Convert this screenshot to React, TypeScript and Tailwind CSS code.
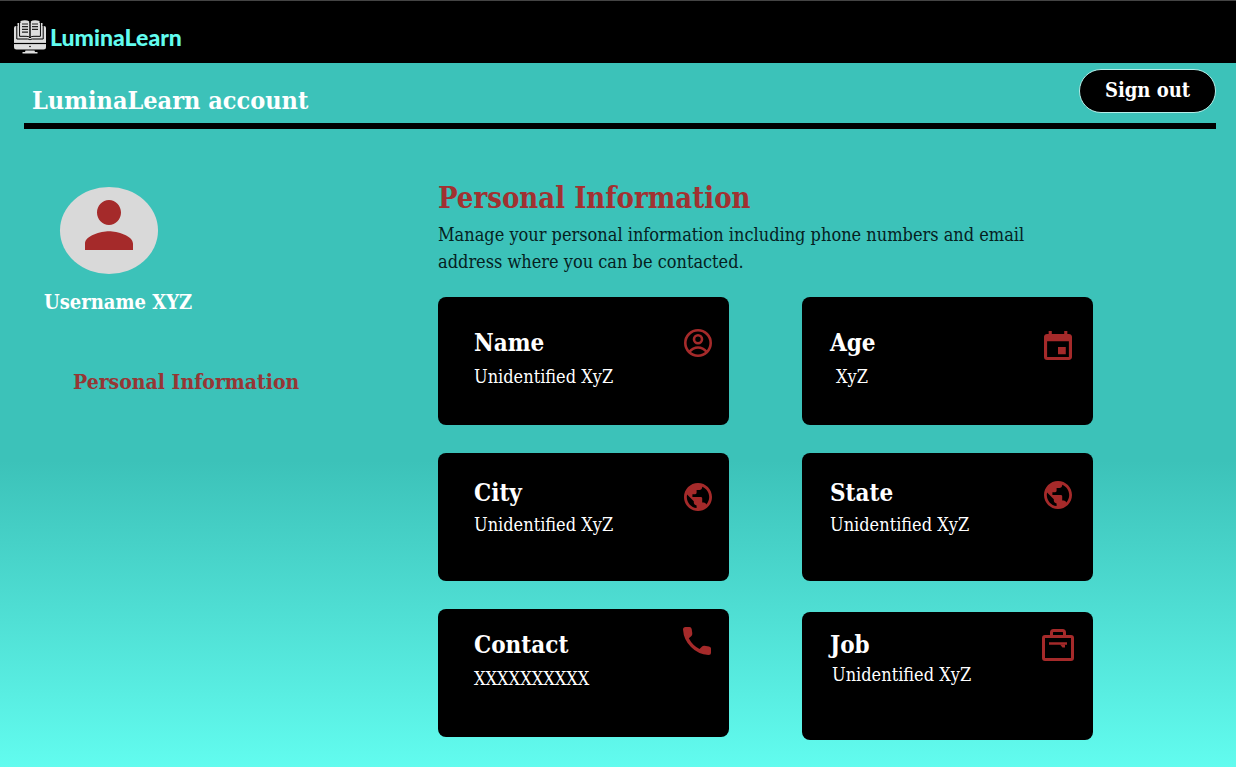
import type { ReactNode } from "react";
import { MdPublic } from "react-icons/md";

const slab = "font-['DejaVu_Serif_Condensed','DejaVu_Serif',serif]";

function LogoIcon() {
  return (
    <svg viewBox="0 0 32 34" className="h-[34px] w-8 shrink-0" aria-hidden="true">
      <path d="M2 6H30Q32 6 32 8V27Q32 29.500 29.500 29.500H2.500Q0 29.500 0 27V8Q0 6 2 6Z" fill="#dedede" />
      <path d="M3.500 3H28.500V18H3.500Z" fill="#dedede" />
      <path d="M2.800 5V19H13.500Q15.500 19 16 20Q16.500 19 18.500 19H29.200V5M5.600 2V16.300H13Q15.200 16.300 16 18Q16.800 16.300 19 16.300H26.400V2" fill="none" stroke="#000" strokeWidth="1" />
      <path d="M6.500 1Q12-.5 15.500 1.500V16.500Q12 14.500 6.500 15.300Z M16.500 1.500Q20-.5 25.500 1V15.300Q20 14.500 16.500 16.500Z" fill="#dedede" />
      <path d="M8 4H14M8 6.700H14M8 9.400H14M8 12.100H14M18 4H24M18 6.700H24M18 9.400H24" stroke="#222" strokeWidth="1.200" />
      <path d="M16 1V17.500" stroke="#000" strokeWidth="1.400" />
      <path d="M0 23.500H32" stroke="#000" strokeWidth="1.200" />
      <circle cx="16" cy="26.500" r=".8" fill="#000" />
      <path d="M11.500 30.500H20.500L21 32H23.500V33.500H8.500V32H11Z" fill="#dedede" />
    </svg>
  );
}

function AccountIcon() {
  return (
    <svg viewBox="0 0 28 28" className="size-7" fill="none" stroke="currentColor" strokeWidth="2.600" aria-hidden="true">
      <circle cx="14" cy="14" r="12.700" />
      <circle cx="14" cy="10.300" r="4" />
      <path d="M5.300 22.800Q9 18.500 14 18.500T22.700 22.800" />
    </svg>
  );
}

function CalendarIcon() {
  return (
    <svg viewBox="3 1 18 20" preserveAspectRatio="none" className="h-[29px] w-7" fill="currentColor" aria-hidden="true">
      <path d="M17 12h-5v5h5zM16 1v2H8V1H6v2H5c-1.110 0-1.990.9-1.990 2L3 19a2 2 0 0 0 2 2h14c1.100 0 2-.9 2-2V5c0-1.100-.9-2-2-2h-1V1zm3 18H5V8h14z" />
    </svg>
  );
}

function PhoneIcon() {
  return (
    <svg viewBox="0 0 28 28" className="size-7" fill="currentColor" aria-hidden="true">
      <path d="M2.500 0H6.500Q8.300 0 8.700 2L9.300 6.200Q9.500 8 8.200 9.200L5.800 11.300Q9.500 18.500 16.500 22L18.800 19.700Q20 18.600 21.500 18.800L26 19.400Q28 19.800 28 21.500V25.500Q28 28 25.500 28Q15 27.300 8 20Q.7 13 0 2.500Q0 0 2.500 0Z" />
    </svg>
  );
}

function BriefcaseIcon() {
  return (
    <svg viewBox="0 0 32 32" className="size-8" fill="none" stroke="currentColor" strokeWidth="3" strokeLinejoin="round" aria-hidden="true">
      <rect x="1.500" y="7.500" width="29" height="23" rx="1.500" />
      <path d="M9.500 7V3.500Q9.500 1.500 11.500 1.500H20.500Q22.500 1.500 22.500 3.500V7" />
      <path d="M7 14.500H25" strokeWidth="2.500" />
      <path d="M18 15.500H23V18.500H20.500Z" fill="currentColor" stroke="none" />
    </svg>
  );
}

function GlobeIcon() {
  return <MdPublic viewBox="2 2 20 20" className="size-7" aria-hidden="true" />;
}

type Detail = {
  label: string;
  value: string;
  icon: ReactNode;
  card: string;
  valueStyle: string;
  iconStyle: string;
};

const details: Detail[] = [
  { label: "Name", value: "Unidentified XyZ", icon: <AccountIcon />, card: "pl-9 pr-[17px] pt-[30px]", valueStyle: "mt-0.5", iconStyle: "pt-0.5" },
  { label: "Age", value: "XyZ", icon: <CalendarIcon />, card: "pl-7 pr-[21px] pt-[30px]", valueStyle: "mt-0.5 pl-1.5", iconStyle: "pt-1" },
  { label: "City", value: "Unidentified XyZ", icon: <GlobeIcon />, card: "pl-9 pr-[17px] pt-6", valueStyle: "", iconStyle: "pt-1.5" },
  { label: "State", value: "Unidentified XyZ", icon: <GlobeIcon />, card: "pl-7 pr-[21px] pt-6", valueStyle: "", iconStyle: "pt-1" },
  { label: "Contact", value: "XXXXXXXXXX", icon: <PhoneIcon />, card: "pl-9 pr-[18px] pt-5", valueStyle: "mt-0.5", iconStyle: "-mt-0.5" },
  { label: "Job", value: "Unidentified XyZ", icon: <BriefcaseIcon />, card: "mt-[3px] pl-7 pr-[19px] pt-[17px]", valueStyle: "-mt-0.5 pl-0.5", iconStyle: "" },
];

function DetailCard({ detail }: { detail: Detail }) {
  return (
    <article className={`flex h-32 items-start justify-between rounded-lg bg-black ${detail.card}`}>
      <div className="whitespace-nowrap text-white">
        <h3 className="text-2xl leading-8 font-bold">{detail.label}</h3>
        <p className={`text-lg leading-8 ${detail.valueStyle}`}>{detail.value}</p>
      </div>
      <div className={`text-[#a52a2a] ${detail.iconStyle}`}>{detail.icon}</div>
    </article>
  );
}

export default function App() {
  return (
    <div className={`min-h-screen bg-[#3cc2b9] bg-linear-to-b from-[#3cc2b9] from-60% to-[#62fcef] ${slab}`}>
      <header className="flex h-[63px] items-center border-t border-[#444] bg-black px-3.5 pt-2.5">
        <a href="#" className="flex items-center gap-1">
          <LogoIcon />
          <span className="font-['Lato','Open_Sans',sans-serif] text-[23px] font-black text-[#62fcef]">LuminaLearn</span>
        </a>
      </header>

      <div className="mr-5 ml-6 flex h-[66px] items-start justify-between border-b-6 border-black pt-1.5 pl-2">
        <h1 className="pt-3.5 text-[25px] leading-9 font-bold text-white">LuminaLearn account</h1>
        <button type="button" className="h-11 w-[137px] rounded-full border border-[#b4eee8] bg-black pb-0.5 text-xl font-bold text-white">
          Sign out
        </button>
      </div>

      <div className="flex pb-7">
        <aside className="w-[438px] shrink-0 pt-[58px]">
          <div className="ml-[60px] flex h-[87px] w-[98px] justify-center rounded-[50%] bg-[#d9d9d9] pt-[13px]">
            <svg viewBox="4 4 16 16" preserveAspectRatio="none" className="h-[50px] w-12 text-[#a52a2a]" fill="currentColor" aria-label="Profile picture" role="img">
              <path d="M12 12c2.210 0 4-1.790 4-4s-1.790-4-4-4-4 1.790-4 4 1.790 4 4 4zm0 2c-2.670 0-8 1.340-8 4v2h16v-2c0-2.660-5.330-4-8-4z" />
            </svg>
          </div>
          <p className="mt-3 pl-11 text-xl leading-8 font-bold text-white">Username XYZ</p>
          <nav className="mt-12 pl-[73px]">
            <a href="#personal" className="text-[21px] leading-8 font-bold text-[#963635]">Personal Information</a>
          </nav>
        </aside>

        <main id="personal" className="w-full max-w-[655px] pt-[51px]">
          <h2 className="text-[29px] leading-9 font-bold text-[#a13131]">Personal Information</h2>
          <p className="mt-[5px] text-lg leading-[27px] text-[#06211f]">
            Manage your personal information including phone numbers and email address where you can be contacted.
          </p>
          <div className="mt-[22px] grid grid-cols-2 gap-x-[73px] gap-y-7">
            {details.map((detail) => (
              <DetailCard key={detail.label} detail={detail} />
            ))}
          </div>
        </main>
      </div>
    </div>
  );
}
